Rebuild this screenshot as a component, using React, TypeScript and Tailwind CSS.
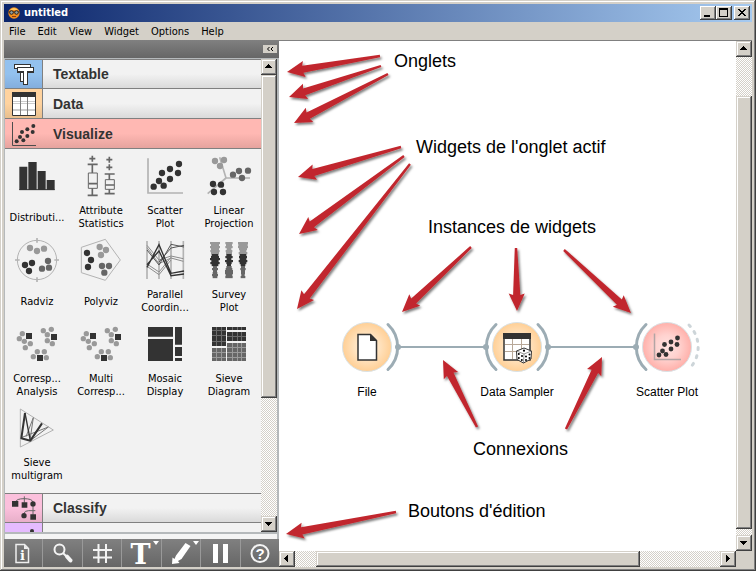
import React from "react";

type Pt = [number, number];
type Dot = [number, number, string];

const LIGHT = "#999999";
const MID = "#666666";
const DARK = "#333333";

const UI_FONT = "font-['DejaVu_Sans_Condensed','Noto_Sans',sans-serif]";
const ARIAL = "font-['Liberation_Sans',Arial,sans-serif]";
const CHECKER =
  "bg-[repeating-conic-gradient(#ffffff_0_25%,#d4d0c8_0_50%)] bg-[length:2px_2px]";
const BEVEL =
  "bg-[#d4d0c8] shadow-[inset_-1px_-1px_#404040,inset_1px_1px_#d4d0c8,inset_-2px_-2px_#808080,inset_2px_2px_#ffffff]";
const TITLE_BEVEL =
  "bg-[#d4d0c8] shadow-[inset_-1px_-1px_#404040,inset_1px_1px_#ffffff,inset_-2px_-2px_#808080]";

/* ---------- small drawing helpers ---------- */

function Dots({ items, r }: { items: Dot[]; r: number }) {
  return (
    <>
      {items.map(([x, y, fill]) => (
        <circle key={`${x}-${y}`} cx={x} cy={y} r={r} fill={fill} />
      ))}
    </>
  );
}

function WidgetIcon({ x, y, children }: { x: number; y: number; children: React.ReactNode }) {
  return (
    <svg className="size-12" viewBox={`${x} ${y} 144 144`} fill="none" aria-hidden="true">
      {children}
    </svg>
  );
}

/* ---------- widget icons ---------- */

const distributions = (
  <WidgetIcon x={39} y={6}>
    <path fill={DARK} d="M58 50h24v70h-24zM85 36h25v84h-25zM113 63h24v57h-24zM140 90h24v30h-24z" />
    <path stroke={DARK} strokeWidth="3" d="M58 119H164" />
  </WidgetIcon>
);

const attributeStatistics = (
  <WidgetIcon x={231} y={6}>
    <path
      stroke={MID}
      strokeWidth="5"
      d="M277 17v18M268 26h18M263 43h30M277 43v26M263 136h30M277 115v21M266 101h25M328 20v18M319 29h18M328 43v18M319 52h18M314 72h30M328 72v17M314 131h30M328 118v13M316 105h27"
    />
    <path stroke={MID} strokeWidth="3" d="M265 69h27v46h-27zM316 89h27v29h-27z" />
  </WidgetIcon>
);

const scatterPlot = (
  <WidgetIcon x={423} y={6}>
    <path stroke="#b3b3b3" strokeWidth="5" d="M444 25V129H549" />
    <Dots
      r={9.5}
      items={[
        [461, 110, DARK], [491, 107, DARK], [477, 93, DARK], [510, 87, DARK],
        [486, 69, DARK], [534, 69, DARK], [510, 57, DARK], [537, 42, DARK],
      ]}
    />
  </WidgetIcon>
);

const linearProjection = (
  <WidgetIcon x={615} y={6}>
    <path stroke="#b3b3b3" strokeWidth="5" d="M750 84H678L659 22M678 84L623 131" />
    <Dots
      r={9.5}
      items={[
        [645, 33, LIGHT], [672, 30, LIGHT], [660, 48, LIGHT],
        [699, 74, MID], [717, 63, MID], [744, 62, MID], [726, 84, MID],
        [639, 102, DARK], [663, 104, DARK], [642, 126, DARK], [669, 126, DARK],
      ]}
    />
  </WidgetIcon>
);

const radviz = (
  <WidgetIcon x={39} y={258}>
    <circle cx="111" cy="330" r="59" stroke="#b3b3b3" strokeWidth="3" />
    <path stroke="#b3b3b3" strokeWidth="5" d="M111 264v14M111 382v14M45 330h14M163 330h14" />
    <Dots
      r={9.5}
      items={[
        [90, 294, LIGHT], [111, 303, LIGHT], [132, 296, LIGHT],
        [75, 345, DARK], [96, 339, DARK], [87, 363, DARK],
        [144, 333, MID], [126, 356, MID], [147, 353, MID],
      ]}
    />
  </WidgetIcon>
);

const polyviz = (
  <WidgetIcon x={231} y={258}>
    <path stroke="#b3b3b3" strokeWidth="3" d="M316 268L361 330L316 391L244 368V292Z" />
    <Dots
      r={9.5}
      items={[
        [299, 291, LIGHT], [318, 300, LIGHT], [303, 315, LIGHT],
        [261, 309, DARK], [273, 330, DARK], [264, 351, DARK],
        [306, 348, MID], [327, 348, MID], [313, 368, MID],
      ]}
    />
  </WidgetIcon>
);

const parallelCoordinates = (
  <WidgetIcon x={423} y={258}>
    <path stroke="#b3b3b3" strokeWidth="5" d="M441 273V387M477 273V387M513 273V387M550 273V387" />
    <path
      stroke="#8c8c8c"
      strokeWidth="3"
      d="M441 286L477 330L513 318L550 326M441 293L477 341L513 324L550 334M441 349L477 374L513 330M441 342L477 366L513 322"
    />
    <path stroke="#555555" strokeWidth="3" d="M441 300L477 345L513 283L552 291M477 336L513 294L552 286" />
    <path stroke={DARK} strokeWidth="4" d="M441 352L477 284L513 370L552 363M441 344L477 303L513 377L552 372" />
  </WidgetIcon>
);

const SURVEY_COLUMNS: { x: number; widths: number[] }[] = [
  { x: 645, widths: [30, 24, 30, 24, 28, 24, 20, 24, 30, 22, 28, 20, 12, 18, 12, 14, 18, 14] },
  { x: 687, widths: [22, 18, 22, 14, 20, 18, 16, 22, 14, 24, 16, 12, 16, 20, 24, 24, 20, 22] },
  { x: 729, widths: [30, 28, 30, 24, 20, 26, 20, 24, 20, 26, 20, 14, 12, 16, 12, 12, 10, 14] },
];

const surveyPlot = (
  <WidgetIcon x={615} y={258}>
    {SURVEY_COLUMNS.map((col) =>
      col.widths.map((w, i) => (
        <rect
          key={`${col.x}-${i}`}
          x={col.x - w / 2}
          y={276 + i * 6}
          width={w}
          height="6.5"
          fill={i < 6 ? LIGHT : i < 12 ? DARK : MID}
        />
      )),
    )}
  </WidgetIcon>
);

const correspondence = (
  <WidgetIcon x={39} y={0}>
    <Dots
      r={8}
      items={[
        [67, 41, LIGHT], [58, 56, LIGHT], [73, 64, LIGHT], [91, 71, LIGHT], [76, 83, LIGHT],
        [130, 32, LIGHT], [154, 28, LIGHT], [142, 44, LIGHT], [142, 62, LIGHT], [157, 71, LIGHT],
        [112, 95, LIGHT], [133, 95, LIGHT], [100, 110, LIGHT], [139, 113, LIGHT],
      ]}
    />
    <path fill={DARK} d="M78 39h18v18h-18zM153 42h18v18h-18zM111 105h18v18h-18z" />
  </WidgetIcon>
);

const mosaicDisplay = (
  <WidgetIcon x={423} y={0}>
    <path
      fill={DARK}
      d="M444 21h75v29h-75zM444 57h75v66h-75zM525 21h21v53h-21zM525 81h21v27h-21zM525 114h21v9h-21z"
    />
  </WidgetIcon>
);

const sieveDiagram = (
  <WidgetIcon x={615} y={0}>
    <path fill={DARK} d="M636 21h42v57h-42zM681 21h57v9h-57zM681 36h57v27h-57z" />
    <path fill={MID} d="M636 84h42v39h-42zM681 69h57v54h-57z" />
    <path
      stroke="#6b6b6b"
      strokeWidth="3"
      d="M649.500 21v57M664.500 21v57M636 31.500h42M636 46.500h42M636 64.500h42M697.500 21v9M712.500 21v9M724.500 21v9M697.500 36v27M712.500 36v27M724.500 36v27M681 49.500h57"
    />
    <path
      stroke="#9a9a9a"
      strokeWidth="3"
      d="M649.500 84v39M664.500 84v39M636 97.500h42M636 112.500h42M697.500 69v54M712.500 69v54M724.500 69v54M681 82.500h57M681 97.500h57M681 112.500h57"
    />
  </WidgetIcon>
);

const sieveMultigram = (
  <WidgetIcon x={39} y={252}>
    <path stroke="#b3b3b3" strokeWidth="3" d="M61 267L160 330L61 381Z" />
    <path stroke="#777777" strokeWidth="3" d="M100 293L90 360M145 321L66 352M145 321L91 362M100 293L78 350" />
    <path stroke={DARK} strokeWidth="4" d="M75 279L91 362" />
    <path stroke={DARK} strokeWidth="6" strokeLinejoin="round" d="M75 279L64 355L91 362L126 310" />
  </WidgetIcon>
);

const WIDGETS: { label: string[]; icon: React.ReactNode }[] = [
  { label: ["Distributi..."], icon: distributions },
  { label: ["Attribute", "Statistics"], icon: attributeStatistics },
  { label: ["Scatter", "Plot"], icon: scatterPlot },
  { label: ["Linear", "Projection"], icon: linearProjection },
  { label: ["Radviz"], icon: radviz },
  { label: ["Polyviz"], icon: polyviz },
  { label: ["Parallel", "Coordin..."], icon: parallelCoordinates },
  { label: ["Survey", "Plot"], icon: surveyPlot },
  { label: ["Corresp...", "Analysis"], icon: correspondence },
  { label: ["Multi", "Corresp..."], icon: correspondence },
  { label: ["Mosaic", "Display"], icon: mosaicDisplay },
  { label: ["Sieve", "Diagram"], icon: sieveDiagram },
  { label: ["Sieve", "multigram"], icon: sieveMultigram },
];

/* ---------- scroll bars ---------- */

const ARROWS = {
  up: "M7 5h1v1h-1zM6 6h3v1h-3zM5 7h5v1h-5zM4 8h7v1h-7z",
  down: "M4 6h7v1h-7zM5 7h5v1h-5zM6 8h3v1h-3zM7 9h1v1h-1z",
  left: "M5 7h1v1h-1zM6 6h1v3h-1zM7 5h1v5h-1zM8 4h1v7h-1z",
  right: "M6 4h1v7h-1zM7 5h1v5h-1zM8 6h1v3h-1zM9 7h1v1h-1z",
};

function ScrollButton({ dir }: { dir: keyof typeof ARROWS }) {
  return (
    <button type="button" aria-label={`Scroll ${dir}`} className={`size-4 shrink-0 ${BEVEL}`}>
      <svg className="size-4" viewBox="0 0 16 16" shapeRendering="crispEdges">
        <path d={ARROWS[dir]} />
      </svg>
    </button>
  );
}

/* ---------- category tabs ---------- */

function Tab({
  label,
  tint,
  edge = "",
  active = false,
  children,
}: {
  label?: string;
  tint: string;
  edge?: string;
  active?: boolean;
  children: React.ReactNode;
}) {
  return (
    <button
      type="button"
      aria-label={label ? undefined : "More"}
      className={`flex h-[30px] w-full shrink-0 border-b border-[#808080] text-left ${edge} ${
        active
          ? "bg-[linear-gradient(#ffb8b3_50%,#e6a39e)]"
          : "bg-[linear-gradient(#f2f2f2_50%,#dadada)]"
      }`}
    >
      <span
        className={`flex h-full w-[38px] shrink-0 items-start border-r ${
          active ? "border-transparent" : "border-[#808080]"
        } ${tint}`}
      >
        {children}
      </span>
      <span className={`self-center pl-2.5 text-sm font-bold text-[#333333] ${ARIAL}`}>{label}</span>
    </button>
  );
}

const textableIcon = (
  <svg className="h-7 w-[37px]" viewBox="0 0 37 28" shapeRendering="crispEdges" aria-hidden="true">
    <g fill="#333333">
      <rect x="9" y="4" width="17" height="5" />
      <rect x="15" y="8" width="5" height="14" />
    </g>
    <g fill="#ffffff">
      <rect x="10" y="5" width="15" height="3" />
      <rect x="16" y="8" width="3" height="13" />
    </g>
    <g fill="#333333">
      <rect x="12" y="7" width="17" height="6" />
      <rect x="18" y="12" width="5" height="13" />
    </g>
    <g fill="#ffffff">
      <rect x="13" y="8" width="15" height="3" />
      <rect x="19" y="8" width="3" height="16" />
    </g>
  </svg>
);

const dataIcon = (
  <svg className="h-7 w-[37px]" viewBox="15 267 111 84" fill="none" aria-hidden="true">
    <path fill="#ffffff" d="M37 278h70v69H37z" />
    <path fill="#cccccc" d="M39 303h66v3H39zM39 309h66v3H39zM39 327h66v6H39z" />
    <path stroke="#808080" strokeWidth="3" d="M61.500 290V346M82.500 290V346" />
    <path stroke="#333333" strokeWidth="3" d="M37.500 278.500h69v68H37.500z" />
    <path fill="#333333" d="M36 276h72v15H36z" />
  </svg>
);

const visualizeIcon = (
  <svg className="h-7 w-[37px]" viewBox="15 357 111 84" fill="none" aria-hidden="true">
    <path stroke="#4d4d4d" strokeWidth="3" d="M37.500 366V436.500H108" />
    <Dots
      r={6}
      items={[
        [50, 424, DARK], [70, 421, DARK], [60, 411, DARK], [82, 408, DARK],
        [66, 396, DARK], [98, 396, DARK], [82, 388, DARK], [100, 378, DARK],
      ]}
    />
  </svg>
);

const classifyIcon = (
  <svg className="h-7 w-[37px]" viewBox="15 42 111 84" fill="none" aria-hidden="true">
    <path stroke="#666666" strokeWidth="3" d="M46 66Q50 56 72 56Q96 56 99 66M73 49V68M99 80V104M72 100Q74 92 86 92H106" />
    <path fill={DARK} d="M36 63h19v17H36zM65 67h17v16H65zM91 103h17v16H91z" />
    <circle cx="99" cy="72" r="8" fill={DARK} />
    <circle cx="72" cy="107" r="8" fill={DARK} />
  </svg>
);

/* ---------- tool bar ---------- */

const TOOLS: { name: string; icon: React.ReactNode }[] = [
  {
    name: "Information",
    icon: (
      <svg className="size-7" viewBox="0 0 28 28" fill="none">
        <path stroke="#eeeeee" strokeWidth="1.500" d="M7 5.500h8.500l4 4V23.500H7z" />
        <path fill="#eeeeee" d="M15 5.500v4.500h4.500z" />
        <text x="13.500" y="21" fill="#ffffff" fontFamily="DejaVu Serif" fontWeight="bold" fontSize="13" textAnchor="middle">
          i
        </text>
      </svg>
    ),
  },
  {
    name: "Search",
    icon: (
      <svg className="size-7" viewBox="0 0 28 28" fill="none" stroke="#f4f4f4">
        <circle cx="10.500" cy="10.500" r="5" strokeWidth="2" />
        <path strokeWidth="2" d="M14 14L17 17" />
        <path strokeWidth="4" strokeLinecap="round" d="M18 17.500L21.500 21.500" />
      </svg>
    ),
  },
  {
    name: "Grid",
    icon: (
      <svg className="size-7" viewBox="0 0 28 28" fill="none" stroke="#f4f4f4" strokeWidth="2">
        <path d="M10.500 5V24M18 5V24M5 11H24M5 18.500H24" />
      </svg>
    ),
  },
  {
    name: "Text",
    icon: (
      <svg className="size-7 overflow-visible" viewBox="0 0 28 28" fill="#ffffff">
        <text x="13.500" y="25" fontFamily="DejaVu Serif" fontWeight="bold" fontSize="27" textAnchor="middle">
          T
        </text>
        <path d="M26 2h6l-3 4z" />
      </svg>
    ),
  },
  {
    name: "Arrow",
    icon: (
      <svg className="size-7 overflow-visible" viewBox="0 0 28 28" fill="#ffffff">
        <path d="M5 25L5.500 18.500L7.500 20L9 16.500L18.500 4L23.500 7L14.500 20L11 22L12.500 24Z" />
        <path d="M26 2h6l-3 4z" />
      </svg>
    ),
  },
  {
    name: "Pause",
    icon: (
      <svg className="size-7" viewBox="0 0 28 28" fill="#ffffff">
        <path d="M7 5h5v19H7zM17 5h5v19h-5z" />
      </svg>
    ),
  },
  {
    name: "Help",
    icon: (
      <svg className="size-7" viewBox="0 0 28 28" fill="none">
        <circle cx="14" cy="14.500" r="8.500" stroke="#f4f4f4" strokeWidth="2" />
        <text x="14" y="20" fill="#ffffff" fontFamily="Liberation Sans" fontWeight="bold" fontSize="15" textAnchor="middle">
          ?
        </text>
      </svg>
    ),
  },
];

/* ---------- canvas ---------- */

const POINTERS: { from: Pt; to: Pt }[] = [
  { from: [380, 56], to: [287, 72] },
  { from: [381, 66], to: [289, 97] },
  { from: [388, 74], to: [294, 123] },
  { from: [401, 147], to: [298, 177] },
  { from: [404, 156], to: [299, 234] },
  { from: [410, 164], to: [297, 309] },
  { from: [471, 247], to: [402, 312] },
  { from: [516, 248], to: [517, 311] },
  { from: [564, 250], to: [631, 313] },
  { from: [477, 427], to: [443, 360] },
  { from: [566, 429], to: [602, 357] },
  { from: [396, 512], to: [286, 534] },
];

function pointerShape(from: Pt, to: Pt): string {
  const dx = to[0] - from[0];
  const dy = to[1] - from[1];
  const len = Math.hypot(dx, dy);
  const ux = dx / len;
  const uy = dy / len;
  const at = (back: number, side: number) =>
    `${(to[0] - ux * back - uy * side).toFixed(1)},${(to[1] - uy * back + ux * side).toFixed(1)}`;
  return [at(0, 0), at(17.5, 8), at(16, 3.6), at(len, 1.2), at(len, -1.2), at(16, -3.6), at(17.5, -8)].join(" ");
}

function Node({
  place,
  label,
  left,
  right,
  tone,
  children,
}: {
  place: string;
  label: string;
  left?: boolean;
  right?: "linked" | "free";
  tone: "orange" | "red";
  children: React.ReactNode;
}) {
  return (
    <div className={`absolute flex w-[110px] flex-col items-center ${place}`}>
      <svg className="size-[70px]" viewBox="-35 -35 70 70" fill="none" aria-hidden="true">
        <circle r="24.500" fill={`url(#${tone})`} stroke="#d9e2e6" />
        {left && (
          <>
            <path stroke="#9cacb4" strokeWidth="3" strokeLinecap="round" d="M-21 -22.500A31 31 0 0 0 -21 22.500" />
            <circle cx="-31" r="3" fill="#9cacb4" />
          </>
        )}
        {right === "linked" && (
          <>
            <path stroke="#9cacb4" strokeWidth="3" strokeLinecap="round" d="M21 -22.500A31 31 0 0 1 21 22.500" />
            <circle cx="31" r="3" fill="#9cacb4" />
          </>
        )}
        {right === "free" && (
          <path
            stroke="#cdd5d9"
            strokeWidth="3"
            strokeLinecap="round"
            strokeDasharray="2 6.300"
            d="M22 -22A31 31 0 0 1 22 22"
          />
        )}
        {children}
      </svg>
      <span className="text-xs leading-5 whitespace-nowrap">{label}</span>
    </div>
  );
}

const NOTES: { text: string; place: string }[] = [
  { text: "Onglets", place: "left-[115px] top-[10px]" },
  { text: "Widgets de l'onglet actif", place: "left-[137px] top-[96px]" },
  { text: "Instances de widgets", place: "left-[149px] top-[176px]" },
  { text: "Connexions", place: "left-[194px] top-[398px]" },
  { text: "Boutons d'édition", place: "left-[129px] top-[460px]" },
];

function Canvas() {
  return (
    <main className={`relative min-w-0 flex-1 overflow-hidden bg-white text-black ${ARIAL}`}>
      <svg className="absolute top-0 left-0 h-[510px] w-[457px]" viewBox="279 41 457 510" aria-hidden="true">
        <defs>
          <radialGradient id="orange">
            <stop offset="0" stopColor="#ffefd9" />
            <stop offset="0.5" stopColor="#ffe3c0" />
            <stop offset="1" stopColor="#ffcf95" />
          </radialGradient>
          <radialGradient id="red">
            <stop offset="0" stopColor="#ffe3e1" />
            <stop offset="0.5" stopColor="#ffd2cf" />
            <stop offset="1" stopColor="#ffb0aa" />
          </radialGradient>
          <filter id="shade" x="-30%" y="-30%" width="160%" height="160%">
            <feDropShadow dx="1.500" dy="2" stdDeviation="1.300" floodColor="#000000" floodOpacity="0.5" />
          </filter>
        </defs>
        <path stroke="#9cacb4" strokeWidth="2" d="M398 347H486M548 347H636" />
        {POINTERS.map((p) => (
          <polygon key={p.to.join()} points={pointerShape(p.from, p.to)} fill="#c1272d" filter="url(#shade)" />
        ))}
      </svg>

      <Node place="left-[33px] top-[271px]" label="File" right="linked" tone="orange">
        <path fill="#ffffff" stroke={DARK} strokeWidth="1.500" d="M-9 -12.500H3.500L9.500 -6.500V13H-9Z" />
        <path fill={DARK} d="M3 -13L10 -6H3Z" />
      </Node>
      <Node place="left-[183px] top-[271px]" label="Data Sampler" left right="linked" tone="orange">
        <path fill="#ffffff" stroke={DARK} strokeWidth="1.500" d="M-13 -13H13V13H-13Z" />
        <path stroke="#b8a898" d="M-12 -2.500H12M-12 4.500H12M-4.500 -8V12M4.500 -8V12" />
        <path fill={DARK} d="M-14 -14H14V-8H-14Z" />
        <path
          fill="#ffffff"
          stroke={DARK}
          strokeWidth="1"
          strokeLinejoin="round"
          d="M-0.500 4L7 1L14.500 4L14 12L6.500 16L0 12.500Z"
        />
        <path stroke="#666666" strokeWidth="0.700" d="M-0.500 4L7 7L14.500 4M7 7L6.500 16" />
        <g fill="#000000">
          <circle cx="7" cy="3.700" r="1.100" />
          <circle cx="1.800" cy="7" r="1" />
          <circle cx="5" cy="9" r="1" />
          <circle cx="1.800" cy="11" r="1" />
          <circle cx="4.800" cy="13" r="1" />
          <circle cx="9" cy="9.500" r="1" />
          <circle cx="12.500" cy="7.500" r="1" />
          <circle cx="9" cy="13" r="1" />
          <circle cx="12.500" cy="11" r="1" />
        </g>
      </Node>
      <Node place="left-[333px] top-[271px]" label="Scatter Plot" left right="free" tone="red">
        <path stroke="#b3a5a5" strokeWidth="1.500" d="M-12.500 -13.500V12.500H14" />
        <Dots
          r={2.4}
          items={[
            [-8, 8, DARK], [-1, 7.500, DARK], [-4.500, 4, DARK], [4, 2, DARK],
            [-2.500, -2.500, DARK], [10, -2.500, DARK], [4, -5, DARK], [10.500, -9, DARK],
          ]}
        />
      </Node>

      {NOTES.map((n) => (
        <p key={n.text} className={`absolute text-lg leading-5 whitespace-nowrap ${n.place}`}>
          {n.text}
        </p>
      ))}
    </main>
  );
}

/* ---------- window ---------- */

export default function App() {
  return (
    <div
      className={`flex h-screen w-full flex-col overflow-hidden bg-[#d4d0c8] p-1 text-[11px] text-black shadow-[inset_-1px_-1px_#404040,inset_1px_1px_#d4d0c8,inset_-2px_-2px_#808080,inset_2px_2px_#ffffff] ${UI_FONT}`}
    >
      <header className="flex h-[18px] shrink-0 items-center bg-[linear-gradient(to_right,#0a246a,#a6caf0)] pr-0.5 pl-1">
        <svg className="size-3" viewBox="0 0 12 12" aria-hidden="true">
          <circle cx="6" cy="6" r="5.700" fill="#f08c1e" />
          <path fill="#ffc861" d="M2 3Q6 -1 10 3Z" />
          <path stroke="#3a2a20" strokeWidth="1" d="M0.500 5H11.500" />
          <circle cx="3.500" cy="5.500" r="1.800" fill="#8fa0a0" stroke="#2b2320" />
          <circle cx="8.500" cy="5.500" r="1.800" fill="#8fa0a0" stroke="#2b2320" />
          <path stroke="#8a3a10" d="M4 9.500H8" />
        </svg>
        <h1 className="flex-1 pl-1 font-bold text-white">untitled</h1>
        <div className="flex">
          <button type="button" aria-label="Minimize" className={`h-3.5 w-4 ${TITLE_BEVEL}`}>
            <svg className="h-3.5 w-4" viewBox="0 0 16 14" shapeRendering="crispEdges">
              <path d="M4 9h6v2H4z" />
            </svg>
          </button>
          <button type="button" aria-label="Maximize" className={`h-3.5 w-4 ${TITLE_BEVEL}`}>
            <svg className="h-3.5 w-4" viewBox="0 0 16 14" shapeRendering="crispEdges">
              <path fillRule="evenodd" d="M3 2h9v9H3zM4 4v6h7V4z" />
            </svg>
          </button>
          <button type="button" aria-label="Close" className={`ml-0.5 h-3.5 w-4 ${TITLE_BEVEL}`}>
            <svg className="h-3.5 w-4" viewBox="0 0 16 14" shapeRendering="crispEdges">
              <path d="M4 3h2v1h1v1h2V4h1V3h2v1h-1v1h-1v1H9v1h1v1h1v1h1v1h-2V9H9V8H7v1H6v1H4V9h1V8h1V7h1V6H6V5H5V4H4z" />
            </svg>
          </button>
        </div>
      </header>

      <nav className="flex h-[18px] shrink-0 items-center gap-3 pt-0.5 pl-[5px]">
        {["File", "Edit", "View", "Widget", "Options", "Help"].map((m) => (
          <button key={m} type="button">
            {m}
          </button>
        ))}
      </nav>

      <div className="flex min-h-0 flex-1">
        <aside className="flex w-[275px] shrink-0 flex-col">
          <div className="flex h-[18px] shrink-0 items-center justify-end bg-[linear-gradient(#808080,#666666)] pr-0.5">
            <button
              type="button"
              aria-label="Collapse"
              className="flex h-2 w-3.5 items-center justify-center bg-[#d4d0c8]"
            >
              <svg className="h-2 w-3.5" viewBox="0 0 14 8" fill="none" stroke="#000000">
                <path d="M6.500 2L4.500 4L6.500 6M10 2L8 4L10 6" />
              </svg>
            </button>
          </div>

          <div className="flex min-h-0 flex-1 border-t border-r-2 border-b-2 border-l border-[#b5b9bb]">
            <div className="flex min-w-0 flex-1 flex-col overflow-hidden bg-[#f2f2f2]">
              <Tab label="Textable" edge="border-t" tint="bg-[linear-gradient(#93c1ee_50%,#83aede)]">
                {textableIcon}
              </Tab>
              <Tab label="Data" tint="bg-[linear-gradient(#ffd39f_50%,#e8bf8e)]">
                {dataIcon}
              </Tab>
              <Tab label="Visualize" active tint="">
                {visualizeIcon}
              </Tab>
              <div className="grid shrink-0 grid-cols-4 pt-px pb-[7px]">
                {WIDGETS.map((w) => (
                  <button
                    key={w.label.join(" ")}
                    type="button"
                    className="flex h-[84px] flex-col items-center gap-1 pt-0.5"
                  >
                    {w.icon}
                    <span className="flex h-[26px] flex-col justify-center leading-[13px] whitespace-nowrap">
                      {w.label.map((line) => (
                        <span key={line}>{line}</span>
                      ))}
                    </span>
                  </button>
                ))}
              </div>
              <Tab label="Classify" edge="border-t" tint="bg-[linear-gradient(#fbc0dc_50%,#e8afc9)]">
                {classifyIcon}
              </Tab>
              <Tab tint="bg-[#e5bbff]">
                <svg className="h-7 w-[37px]" viewBox="0 0 37 28" fill={DARK} aria-hidden="true">
                  <circle cx="27" cy="8" r="2" />
                  <circle cx="20" cy="14" r="2" />
                  <circle cx="12" cy="18" r="2" />
                </svg>
              </Tab>
            </div>
            <div className={`flex w-4 shrink-0 flex-col ${CHECKER}`}>
              <ScrollButton dir="up" />
              <div className={`flex-[323] ${BEVEL}`} />
              <div className="flex-[118]" />
              <ScrollButton dir="down" />
            </div>
          </div>

          <div className="h-[5px] shrink-0 border-r-2 border-l border-[#b5b9bb] bg-[#f4f4f4]" />

          <div className="flex h-7 shrink-0 bg-[linear-gradient(#808080,#666666)]">
            {TOOLS.map((t) => (
              <button
                key={t.name}
                type="button"
                aria-label={t.name}
                className="flex flex-1 items-center justify-center border-r border-[#999999] last:border-r-0"
              >
                {t.icon}
              </button>
            ))}
          </div>
        </aside>

        <div className="flex min-w-0 flex-1 flex-col border-t border-[#808080]">
          <div className="flex min-h-0 flex-1">
            <Canvas />
            <div className={`flex w-4 shrink-0 flex-col ${CHECKER}`}>
              <ScrollButton dir="up" />
              <div className="flex-[39]" />
              <div className={`flex-[433] ${BEVEL}`} />
              <div className="flex-[6]" />
              <ScrollButton dir="down" />
            </div>
          </div>
          <div className="flex h-4 shrink-0">
            <div className={`flex flex-1 ${CHECKER}`}>
              <ScrollButton dir="left" />
              <div className="flex-[21]" />
              <div className={`flex-[324] ${BEVEL}`} />
              <div className="flex-[80]" />
              <ScrollButton dir="right" />
            </div>
            <div className="w-4 shrink-0" />
          </div>
        </div>
      </div>
    </div>
  );
}
